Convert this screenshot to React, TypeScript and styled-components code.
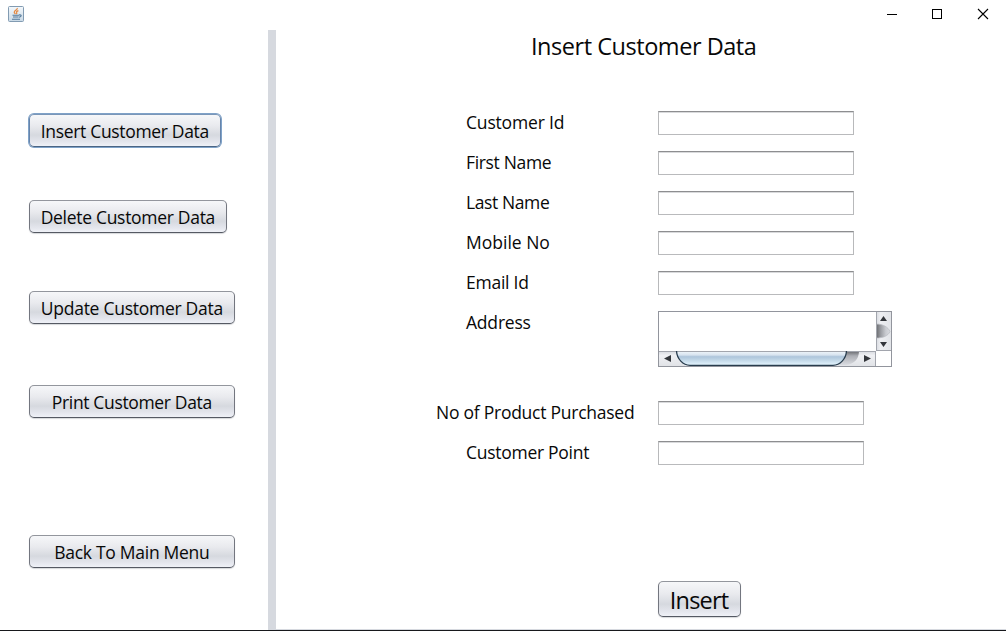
import React from "react";
import styled, { createGlobalStyle } from "styled-components";

const GlobalStyle = createGlobalStyle`
  * { box-sizing: border-box; }
  body { margin: 0; background: #fff; overflow: hidden; }
  button, input, textarea { font-family: "Open Sans", "Noto Sans", sans-serif; }
`;

const Window = styled.div`
  display: flex;
  flex-direction: column;
  width: 1006px;
  height: 631px;
  background: #fff;
  color: #080808;
  font-family: "Open Sans", "Noto Sans", sans-serif;
  border-bottom: 1px solid #17181c;
`;

const TitleBar = styled.header`
  display: flex;
  justify-content: space-between;
  height: 30px;
  flex: none;
  padding: 6px 17px 0 8px;
`;

const WindowControls = styled.div`
  display: flex;
  gap: 34px;
  padding-top: 2px;
`;

const Body = styled.div`
  display: flex;
  flex: 1;
  min-height: 0;
`;

const Sidebar = styled.nav`
  display: flex;
  flex-direction: column;
  align-items: flex-start;
  width: 268px;
  padding: 84px 0 0 29px;
`;

const Divider = styled.div`
  width: 8px;
  background: #d6d9df;
`;

const Content = styled.main`
  display: flex;
  flex-direction: column;
  flex: 1;
  border-bottom: 1px solid #d6d9df;
`;

const Button = styled.button<{ $width: number; $large?: boolean; $focused?: boolean }>`
  display: flex;
  align-items: center;
  justify-content: center;
  flex: none;
  width: ${(p) => p.$width}px;
  height: ${(p) => (p.$large ? 36 : 33)}px;
  padding: ${(p) => (p.$large ? 3 : 2)}px 0 0;
  border: 1px solid;
  border-color: ${(p) => (p.$focused ? "#7a96b8 #6684ab #4b6584" : "#93969d #73767f #555963")};
  border-radius: 5px;
  background: linear-gradient(#f6f7f9 0%, #e9eaee 35%, #d6d9df 65%, #e3e5ec 85%, #eff1f7 100%);
  box-shadow: ${(p) => (p.$focused ? "0 0 0 1px #7fa2c8" : "0 1px 1px rgba(120,125,135,.3)")};
  color: #080808;
  font-size: ${(p) => (p.$large ? 23.5 : 17.5)}px;
  line-height: ${(p) => (p.$large ? 23 : 17)}px;
  white-space: nowrap;
`;

const Caption = styled.span<{ $spacing: number }>`
  letter-spacing: ${(p) => p.$spacing}px;
  margin-right: ${(p) => -p.$spacing}px;
`;

const Gap = styled.div<{ $height: number }>`
  height: ${(p) => p.$height}px;
  flex: none;
`;

const Heading = styled.h1`
  margin: 0;
  padding: 0 0 0 255px;
  height: 81px;
  font-size: 23.5px;
  font-weight: 400;
  line-height: 33px;
  white-space: nowrap;
`;

const Form = styled.form`
  display: flex;
  flex-direction: column;
  padding-left: 160px;
`;

const Row = styled.div<{ $height?: number }>`
  display: flex;
  height: ${(p) => p.$height ?? 40}px;
`;

const Label = styled.label<{ $wide?: boolean }>`
  width: 222px;
  padding-left: ${(p) => (p.$wide ? 0 : 30)}px;
  font-size: 17.5px;
  line-height: 23px;
  white-space: nowrap;
`;

const Field = styled.input<{ $width?: number }>`
  width: ${(p) => p.$width ?? 196}px;
  height: 24px;
  margin: 0;
  padding: 0 6px;
  border: 1px solid;
  border-color: #8d8e90 #b8b9bb #b9babc;
  border-radius: 0;
  background: #fff;
  box-shadow: inset 0 1px 0 #d9dadc;
  outline: none;
`;

const ScrollPane = styled.div`
  display: grid;
  grid-template: 39px 15px / 217px 15px;
  width: 234px;
  height: 56px;
  border: 1px solid #92959d;
`;

const TextArea = styled.textarea`
  width: 217px;
  height: 39px;
  margin: 0;
  border: 0;
  resize: none;
  outline: none;
  overflow: hidden;
`;

const ScrollGraphic = styled.svg`
  display: block;
`;

const SubmitArea = styled.div`
  padding: 100px 0 0 222px;
`;

function JavaIcon() {
  return (
    <svg width="16" height="16" viewBox="0 0 16 16">
      <defs>
        <linearGradient id="iconBg" x1="0" y1="0" x2="0" y2="1">
          <stop offset="0" stopColor="#f4f8fb" />
          <stop offset="1" stopColor="#c9d9e6" />
        </linearGradient>
      </defs>
      <rect x="0.5" y="0.5" width="15" height="15" rx="1" fill="url(#iconBg)" stroke="#829bb2" />
      <path d="M9.3 2C9.7 4 6 4.6 6.3 6.3C6.4 7.1 7.3 7.5 7.4 8.2M10.4 4.6C8.4 5.3 8.3 6 8.7 6.7C9 7.2 8.7 7.7 8.3 8.1" fill="none" stroke="#e58b45" strokeWidth="1.3" />
      <path d="M4.5 9.2H11M5 11H10.6M4 13.2H12M11 9C14 8.4 13.8 11 11 11.2" fill="none" stroke="#54799a" strokeWidth="1.1" />
    </svg>
  );
}

function VerticalScrollbar() {
  return (
    <ScrollGraphic width="15" height="39" viewBox="0 0 15 39">
      <defs>
        <linearGradient id="vTrack"><stop offset="0" stopColor="#65676b" /><stop offset=".35" stopColor="#9d9fa4" /><stop offset=".7" stopColor="#c9cbd0" /><stop offset="1" stopColor="#d9dbe0" /></linearGradient>
        <linearGradient id="vButton"><stop offset="0" stopColor="#d6d9df" /><stop offset=".3" stopColor="#eeeff2" /><stop offset="1" stopColor="#e2e4e8" /></linearGradient>
      </defs>
      <rect width="15" height="39" fill="url(#vButton)" />
      <path d="M0 12C7 12 12 15 14 19.5C12 24 7 26 0 26Z" fill="url(#vTrack)" />
      <path d="M0 12C7 12 12 15 14 19.5C12 24 7 26 0 26" fill="none" stroke="#b8bac0" strokeWidth=".7" />
      <path d="M.5 0V39M0 38.5H15" stroke="#a2a5ad" fill="none" />
      <path d="M7.5 4L11 9H4ZM4 30H11L7.5 35Z" fill="#33363b" />
    </ScrollGraphic>
  );
}

function HorizontalScrollbar() {
  return (
    <ScrollGraphic width="217" height="15" viewBox="0 0 217 15">
      <defs>
        <linearGradient id="hThumb" x1="0" y1="0" x2="0" y2="1"><stop offset="0" stopColor="#f1f7fb" /><stop offset=".28" stopColor="#d7e3ef" /><stop offset=".4" stopColor="#adc5db" /><stop offset=".65" stopColor="#c3d8e8" /><stop offset="1" stopColor="#e5f6ff" /></linearGradient>
        <linearGradient id="hTrack" x1="0" y1="0" x2="0" y2="1"><stop offset="0" stopColor="#65676b" /><stop offset=".35" stopColor="#acaeb4" /><stop offset="1" stopColor="#d9dbe0" /></linearGradient>
        <linearGradient id="hButton" x1="0" y1="0" x2="0" y2="1"><stop offset="0" stopColor="#d6d9df" /><stop offset=".3" stopColor="#eff0f3" /><stop offset="1" stopColor="#e1e3e7" /></linearGradient>
      </defs>
      <rect width="217" height="15" fill="url(#hButton)" />
      <path d="M180 0H200C200 8 195 13 187 14H178Z" fill="url(#hTrack)" />
      <path d="M17.5 0C18 8 24 14.3 31 14.3H174C181 14.3 187 8 187.5 0Z" fill="url(#hThumb)" />
      <path d="M0 .5H217M216.5 0V15" stroke="#a2a5ad" fill="none" />
      <path d="M17.5 0C18 8 24 14.3 31 14.3H174C181 14.3 187 8 187.5 0" fill="none" stroke="#283c4d" strokeWidth="1.3" />
      <path d="M12 4V11L5 7.5ZM205 4V11L212 7.5Z" fill="#33363b" />
    </ScrollGraphic>
  );
}

const personalFields = [
  { label: "Customer Id", spacing: -0.18 },
  { label: "First Name", spacing: -0.33 },
  { label: "Last Name", spacing: -0.4 },
  { label: "Mobile No", spacing: 0 },
  { label: "Email Id", spacing: -0.25 },
];

export default function App() {
  return (
    <Window>
      <GlobalStyle />
      <TitleBar>
        <JavaIcon />
        <WindowControls>
          <svg width="12" height="12" shapeRendering="crispEdges"><path d="M2 6.5H12" stroke="#000" /></svg>
          <svg width="12" height="12" shapeRendering="crispEdges"><path d="M1.5 1.5H10.5V10.5H1.5Z" fill="none" stroke="#000" /></svg>
          <svg width="12" height="12"><path d="M1 1L11 11M11 1L1 11" stroke="#000" strokeWidth="1.1" /></svg>
        </WindowControls>
      </TitleBar>
      <Body>
        <Sidebar>
          <Button $width={192} $focused><Caption $spacing={-0.33}>Insert Customer Data</Caption></Button>
          <Gap $height={53} />
          <Button $width={198}><Caption $spacing={-0.3}>Delete Customer Data</Caption></Button>
          <Gap $height={58} />
          <Button $width={206}><Caption $spacing={-0.27}>Update Customer Data</Caption></Button>
          <Gap $height={61} />
          <Button $width={206}><Caption $spacing={-0.35}>Print Customer Data</Caption></Button>
          <Gap $height={117} />
          <Button $width={206}><Caption $spacing={-0.28}>Back To Main Menu</Caption></Button>
        </Sidebar>
        <Divider />
        <Content>
          <Heading><Caption $spacing={-0.46}>Insert Customer Data</Caption></Heading>
          <Form>
            {personalFields.map((f) => (
              <Row key={f.label}>
                <Label><Caption $spacing={f.spacing}>{f.label}</Caption></Label>
                <Field />
              </Row>
            ))}
            <Row $height={90}>
              <Label><Caption $spacing={-0.2}>Address</Caption></Label>
              <ScrollPane>
                <TextArea />
                <VerticalScrollbar />
                <HorizontalScrollbar />
              </ScrollPane>
            </Row>
            <Row>
              <Label $wide><Caption $spacing={-0.25}>No of Product Purchased</Caption></Label>
              <Field $width={206} />
            </Row>
            <Row>
              <Label><Caption $spacing={-0.28}>Customer Point</Caption></Label>
              <Field $width={206} />
            </Row>
            <SubmitArea>
              <Button type="button" $width={83} $large><Caption $spacing={-0.8}>Insert</Caption></Button>
            </SubmitArea>
          </Form>
        </Content>
      </Body>
    </Window>
  );
}
